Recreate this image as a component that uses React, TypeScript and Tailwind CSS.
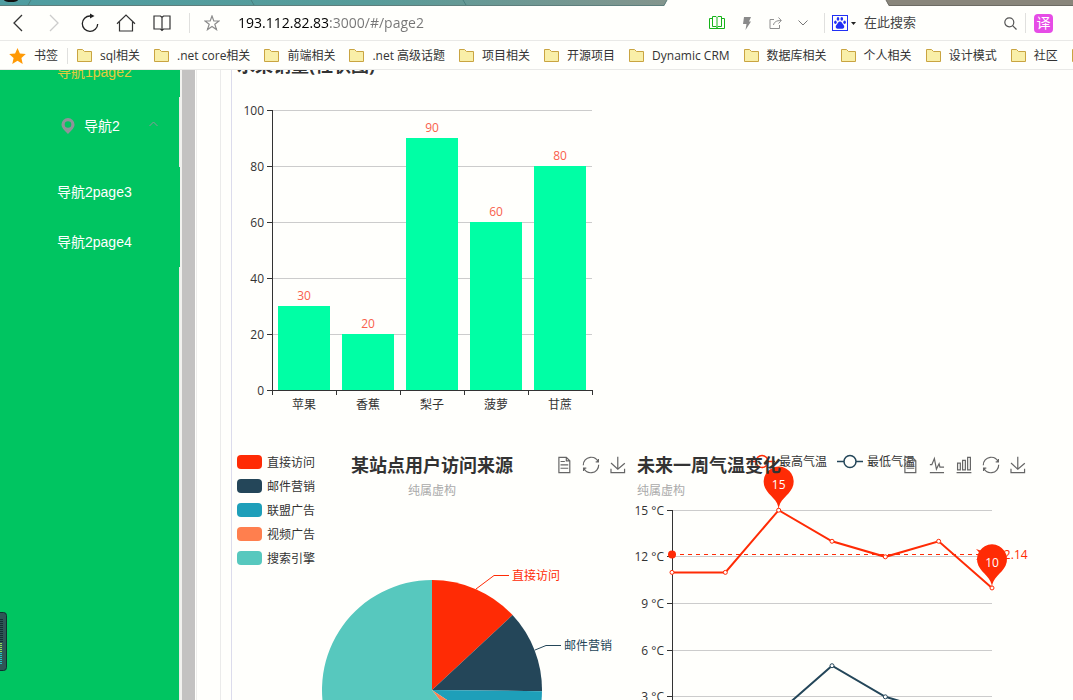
import { useState, type ReactNode } from "react";

const bookmarks = [
  "sql相关",
  ".net core相关",
  "前端相关",
  ".net 高级话题",
  "项目相关",
  "开源项目",
  "Dynamic CRM",
  "数据库相关",
  "个人相关",
  "设计模式",
  "社区",
];

const fruits = [
  { name: "苹果", value: 30 },
  { name: "香蕉", value: 20 },
  { name: "梨子", value: 90 },
  { name: "菠萝", value: 60 },
  { name: "甘蔗", value: 80 },
];

const sources = [
  { name: "直接访问", value: 335, color: "#ff2b05", swatch: "bg-[#ff2b05]" },
  { name: "邮件营销", value: 310, color: "#244659", swatch: "bg-[#244659]" },
  { name: "联盟广告", value: 234, color: "#1e9fb9", swatch: "bg-[#1e9fb9]" },
  { name: "视频广告", value: 135, color: "#ff7f4e", swatch: "bg-[#ff7f4e]" },
  { name: "搜索引擎", value: 1548, color: "#57c8be", swatch: "bg-[#57c8be]" },
];

const highs = [11, 11, 15, 13, 12, 13, 10];
const lows = [1, -2, 2, 5, 3, 2, 0];

const toolIcons = {
  数据视图: "M17.5,17.3H33M45.4,29.5h-28M11.5,2v56H51V14.8L38.4,2H11.5zM38.4,2.2v12.7H51M45.4,41.7h-28",
  切换为折线图: "M4.1,28.9h7.1l9.3-22l7.4,38l9.7-19.7l3,12.8h14.9M4.1,58h51.4",
  切换为柱状图: "M6.7,22.9h10V48h-10V22.9zM24.9,13h10v35h-10V13zM43.2,2h10v46h-10V2zM3.1,58h53.7",
  还原:
    "M47,18.9h9.8V8.7M56.3,20.1C52.1,9,40.5,0.6,26.8,2.1C12.6,3.7,1.6,16.2,2.1,30.6M13,41.1H3.1v10.2M3.7,39.9c4.2,11.1,15.8,19.5,29.5,18c14.2-1.6,25.2-14.1,24.7-28.5",
  保存为图片: "M4.7,22.9L29.3,45.5L54.7,23.4M4.6,43.6L4.6,58L53.8,58L53.8,43.6M29.2,45.1L29.2,0",
};

type Tool = keyof typeof toolIcons;

function IconButton({ label, className, children }: { label: string; className: string; children: ReactNode }) {
  return (
    <button type="button" aria-label={label} className={`flex h-8 shrink-0 items-center justify-center ${className}`}>
      {children}
    </button>
  );
}

function FolderIcon() {
  return (
    <svg className="shrink-0" width="15" height="13" viewBox="0 0 15 13" fill="#f9efa8" stroke="#c9a441">
      <path d="M0.5 0.5H5.5L7.5 2.5H14.5V12.5H0.5Z" />
    </svg>
  );
}

function TabStrip() {
  return (
    <svg className="block h-[6px] w-full shrink-0" viewBox="0 0 1073 6" preserveAspectRatio="none" aria-hidden="true">
      <defs>
        <linearGradient id="tabs" x1="0" x2="1">
          <stop offset="0" stopColor="#4f9da1" />
          <stop offset="0.55" stopColor="#579c9a" />
          <stop offset="1" stopColor="#84958d" />
        </linearGradient>
      </defs>
      <path d="M0 0H667L664 6H0Z" fill="url(#tabs)" />
      <path d="M0 5.5H664L667 0" fill="none" stroke="#5e7f7d" />
      <path d="M31 0L28 5M251 0L254 5M463 0L466 5" stroke="#49807f" fill="none" />
      <path d="M886 0H1073V6H889Z" fill="#89867b" />
      <path d="M886 0L889 5.5H1073" fill="none" stroke="#6d6b64" />
      <ellipse cx="11" cy="0" rx="7" ry="2" fill="#111" />
    </svg>
  );
}

function Toolbar() {
  const [address, setAddress] = useState("193.112.82.83:3000/#/page2");
  const [query, setQuery] = useState("");

  return (
    <header className="flex h-[35px] shrink-0 items-center border-b border-[#e9e9e7]">
      <IconButton label="后退" className="w-9">
        <svg width="12" height="18" viewBox="0 0 12 18" fill="none" stroke="#333" strokeWidth="1.3">
          <path d="M10 1L2 9L10 17" />
        </svg>
      </IconButton>
      <IconButton label="前进" className="w-9">
        <svg width="12" height="18" viewBox="0 0 12 18" fill="none" stroke="#ccc" strokeWidth="1.3">
          <path d="M2 1L10 9L2 17" />
        </svg>
      </IconButton>
      <IconButton label="刷新" className="w-9">
        <svg width="18" height="20" viewBox="0 0 18 20" fill="none" stroke="#222" strokeWidth="1.3">
          <path d="M9 3A7.7 7.7 0 1 0 16.7 11" />
          <path d="M9 0.5L13.5 3L9 5.5Z" fill="#222" stroke="none" />
        </svg>
      </IconButton>
      <IconButton label="主页" className="w-9">
        <svg width="20" height="18" viewBox="0 0 20 18" fill="none" stroke="#333" strokeWidth="1.2">
          <path d="M1 9.7L10 1L19 9.7M3.5 8V17H16.5V8" />
        </svg>
      </IconButton>
      <IconButton label="阅读" className="w-9">
        <svg width="18" height="18" viewBox="0 0 18 18" fill="none" stroke="#333" strokeWidth="1.2">
          <path d="M1 2H7.5L9 3.5L10.5 2H17V15H10.5L9 16.5L7.5 15H1ZM9 3.5V17" />
        </svg>
      </IconButton>
      <span className="ml-[9px] h-5 w-px bg-[#e0e0de]" />
      <form className="flex min-w-0 flex-1 items-center" onSubmit={(event) => event.preventDefault()}>
        <IconButton label="收藏" className="w-11">
          <svg width="16" height="16" viewBox="0 0 16 16" fill="none" stroke="#8c8c8c" strokeWidth="1.2">
            <path d="M8 1L9.8 6H15L10.8 9.2L12.5 14.6L8 11.4L3.5 14.6L5.2 9.2L1 6H6.2Z" />
          </svg>
        </IconButton>
        {/* host is drawn darker than the port and path */}
        <input
          aria-label="地址"
          className="ml-1 w-full min-w-0 bg-linear-to-r from-black from-[91px] to-[#757575] to-[91px] bg-clip-text text-sm text-transparent caret-black outline-none"
          value={address}
          onChange={(event) => setAddress(event.target.value)}
        />
      </form>
      <IconButton label="阅读模式" className="w-8">
        <svg width="16" height="14" viewBox="0 0 16 14" fill="none" stroke="#16b31a">
          <path d="M3.5 10.5V0.5H7L8 1.5L9 0.5H12.5V10.5H9L8 11.5L7 10.5ZM8 1.5V13M3.5 2.5H0.5V12.5H15.5V2.5H12.5" />
        </svg>
      </IconButton>
      <IconButton label="加速" className="w-7">
        <svg width="8" height="13" viewBox="0 0 8 13" fill="#8a8a8a">
          <path d="M1 0H8L6 4.5H8L2.5 13L3.5 7H0Z" />
        </svg>
      </IconButton>
      <IconButton label="分享" className="w-7">
        <svg width="13" height="13" viewBox="0 0 13 13" fill="none" stroke="#8f8f8f">
          <path d="M5 2.5H1V11.5H10.5V8M4.5 8C5 5 7.5 3.5 12 3.5M9.5 0.5L12.3 3.5L9.5 6.5" />
        </svg>
      </IconButton>
      <IconButton label="更多" className="w-7">
        <svg width="10" height="6" viewBox="0 0 10 6" fill="none" stroke="#777">
          <path d="M0.5 0.5L5 5L9.5 0.5" />
        </svg>
      </IconButton>
      <form
        className="ml-[7px] flex w-[249px] shrink-0 items-center"
        role="search"
        onSubmit={(event) => event.preventDefault()}
      >
        <span className="mr-[7px] h-5 w-px bg-[#e0e0de]" />
        <button type="button" aria-label="选择搜索引擎" className="flex items-center gap-[3px]">
          <svg width="16" height="16" viewBox="0 0 16 16" fill="#2130f5">
            <rect x="0.5" y="0.5" width="15" height="15" fill="none" stroke="#2130f5" />
            <ellipse cx="3.4" cy="7.2" rx="1.3" ry="1.8" />
            <ellipse cx="6" cy="3.9" rx="1.3" ry="1.8" />
            <ellipse cx="9.8" cy="3.9" rx="1.3" ry="1.8" />
            <ellipse cx="12.6" cy="7.2" rx="1.3" ry="1.8" />
            <path d="M8 6.6C9.8 6.6 10 8.4 11.2 9.6C13 11.3 12.4 14 10.2 13.8C8.8 13.6 7.2 13.6 5.8 13.8C3.6 14 3 11.3 4.8 9.6C6 8.4 6.2 6.6 8 6.6Z" />
          </svg>
          <svg width="5" height="3" viewBox="0 0 5 3" fill="#222">
            <path d="M0 0H5L2.5 3Z" />
          </svg>
        </button>
        <input
          aria-label="搜索"
          className="ml-2 w-32 text-[13px] text-[#444] outline-none placeholder:text-[#444]"
          placeholder="在此搜索"
          value={query}
          onChange={(event) => setQuery(event.target.value)}
        />
        <button type="submit" aria-label="搜索" className="ml-auto">
          <svg width="13" height="13" viewBox="0 0 13 13" fill="none" stroke="#555" strokeWidth="1.2">
            <circle cx="5.3" cy="5.3" r="4.5" />
            <path d="M8.6 8.6L12.5 12.5" />
          </svg>
        </button>
        <span className="mx-2 h-5 w-px bg-[#e0e0de]" />
        <button
          type="button"
          className="mr-5 flex size-[19px] items-center justify-center rounded-sm bg-[#e64ce6] text-sm leading-none text-white"
        >
          译
        </button>
      </form>
    </header>
  );
}

function BookmarkBar() {
  return (
    <nav className="flex h-[29px] shrink-0 items-center overflow-hidden border-b border-[#e9e9e7] pt-px text-xs whitespace-nowrap text-[#333]">
      <a href="#/bookmarks" className="ml-[9px] flex items-center gap-2">
        <svg width="17" height="16" viewBox="0 0 17 16" fill="#ff9a05">
          <path d="M8.5 0L10.9 5.4L16.8 6L12.4 10L13.7 16L8.5 12.8L3.3 16L4.6 10L0.2 6L6.1 5.4Z" />
        </svg>
        书签
      </a>
      <span className="mx-[9px] h-4 w-px shrink-0 bg-[#e0e0de]" />
      <div className="flex items-center gap-[14px]">
        {bookmarks.map((name) => (
          <a key={name} href="#/bookmarks" className="flex shrink-0 items-center gap-2">
            <FolderIcon />
            {name}
          </a>
        ))}
        <button type="button" aria-label="更多书签">
          <FolderIcon />
        </button>
      </div>
    </nav>
  );
}

function Sidebar() {
  return (
    <aside className="w-[180px] shrink-0 border-r border-[#e9ebe6] bg-[#00c561] font-['Liberation_Sans','Noto_Sans_CJK_SC',sans-serif] text-sm text-white">
      <nav className="-mt-[23px]">
        <a href="#/page2" className="-mr-px flex h-[50px] items-center bg-[#00c561] pl-[57px] text-[#e3cb3c]">
          导航1page2
        </a>
        <button type="button" aria-expanded="true" className="flex h-[58px] w-full items-center pl-[61px]">
          <svg width="14" height="16" viewBox="0 0 13 16" fill="#909399" fillRule="evenodd">
            <path d="M6.5 0A6.5 6.5 0 0 1 13 6.5C13 9.6 10.6 12 6.5 16C2.4 12 0 9.6 0 6.5A6.5 6.5 0 0 1 6.5 0ZM6.5 3.2A3.3 3.3 0 1 0 6.5 9.8A3.3 3.3 0 1 0 6.5 3.2Z" />
          </svg>
          <span className="ml-[9px]">导航2</span>
          <svg className="mr-[21px] mb-1 ml-auto" width="9" height="6" viewBox="0 0 9 6" fill="none" stroke="#909399">
            <path d="M0.5 5L4.5 1L8.5 5" />
          </svg>
        </button>
        <div className="mt-3">
          {["page3", "page4"].map((page) => (
            <a
              key={page}
              href={`#/${page}`}
              className="-mr-px flex h-[50px] items-center bg-[#00c561] pl-[57px]"
            >
              导航2{page}
            </a>
          ))}
        </div>
      </nav>
    </aside>
  );
}

function Toolbox({ tools }: { tools: Tool[] }) {
  return (
    <div className="absolute top-[7px] right-[6px] flex gap-[11px]">
      {tools.map((tool) => (
        <button key={tool} type="button" aria-label={tool} className="size-4">
          <svg
            className="block size-full overflow-visible"
            viewBox="1 1 58 58"
            fill="none"
            stroke="#666"
            strokeWidth="1.2"
          >
            <path d={toolIcons[tool]} vectorEffect="non-scaling-stroke" />
          </svg>
        </button>
      ))}
    </div>
  );
}

function ChartTitle({ title, subtitle, centered }: { title: string; subtitle?: string; centered?: boolean }) {
  return (
    <div className={`absolute inset-x-[5px] top-[5px] ${centered ? "text-center" : ""}`}>
      <h2 className="text-lg leading-5 font-bold text-[#333]">{title}</h2>
      {subtitle ? <p className="mt-[6px] text-xs leading-5 text-[#aaa]">{subtitle}</p> : null}
    </div>
  );
}

function FruitChart() {
  const y = (value: number) => 340 - value * 2.8;

  return (
    <section className="relative size-[400px]">
      <svg className="block size-full text-xs" viewBox="0 0 400 400">
        {[0, 20, 40, 60, 80, 100].map((tick) => (
          <g key={tick}>
            {tick > 0 ? <path d={`M40 ${y(tick) + 0.5}H360`} stroke="#ccc" /> : null}
            <path d={`M35 ${y(tick) + 0.5}H40`} stroke="#333" />
            <text x="32" y={y(tick) + 5} textAnchor="end" fill="#333">
              {tick}
            </text>
          </g>
        ))}
        {fruits.map((fruit, index) => (
          <g key={fruit.name}>
            <rect x={46 + index * 64} y={y(fruit.value)} width="52" height={340 - y(fruit.value)} fill="#00ffa5" />
            <text x={72 + index * 64} y={y(fruit.value) - 6} textAnchor="middle" fill="#f9604c">
              {fruit.value}
            </text>
            <path d={`M${104.5 + index * 64} 340V345`} stroke="#333" />
            <text x={72 + index * 64} y="359" textAnchor="middle" fill="#333">
              {fruit.name}
            </text>
          </g>
        ))}
        <path d="M40.5 60V345M40 340.5H361" stroke="#333" />
      </svg>
      <ChartTitle title="水果销量(柱状图)" />
    </section>
  );
}

function slicePath(start: number, end: number) {
  const point = (turn: number) => {
    const angle = turn * Math.PI * 2;
    return `${200 + 110 * Math.sin(angle)} ${240 - 110 * Math.cos(angle)}`;
  };
  return `M200 240L${point(start)}A110 110 0 ${end - start > 0.5 ? 1 : 0} 1 ${point(end)}Z`;
}

function SourceChart() {
  const total = sources.reduce((sum, source) => sum + source.value, 0);
  let offset = 0;

  return (
    <section className="relative size-[400px]">
      <svg className="block size-full text-xs" viewBox="0 0 400 400">
        {sources.map((source) => {
          const start = offset / total;
          offset += source.value;
          return <path key={source.name} d={slicePath(start, offset / total)} fill={source.color} />;
        })}
        <path d="M244 139L262 125.5H277" fill="none" stroke="#ff2b05" />
        <text x="280" y="130" fill="#ff2b05">
          直接访问
        </text>
        <path d="M303 200L314 195.5H329" fill="none" stroke="#244659" />
        <text x="332" y="200" fill="#244659">
          邮件营销
        </text>
      </svg>
      <ChartTitle title="某站点用户访问来源" subtitle="纯属虚构" centered />
      <ul className="absolute top-[5px] left-[5px] flex flex-col gap-2 text-xs leading-4 text-[#333]">
        {sources.map((source) => (
          <li key={source.name} className="flex items-start gap-[5px]">
            <span className={`h-[14px] w-[25px] rounded ${source.swatch}`} />
            {source.name}
          </li>
        ))}
      </ul>
      <Toolbox tools={["数据视图", "还原", "保存为图片"]} />
    </section>
  );
}

function Pin({ x, y, label }: { x: number; y: number; label: number }) {
  return (
    <g transform={`translate(${x} ${y})`}>
      <path
        d="M-13.55-22.14A15 15 0 1 1 13.55-22.14C9.7-14 0-10.5 0 0C0-10.5-9.7-14-13.55-22.14Z"
        fill="#ff2b05"
      />
      <text y="-21" textAnchor="middle" fill="#fff" className="font-medium">
        {label}
      </text>
    </g>
  );
}

function TemperatureChart() {
  const x = (index: number) => 40 + (index * 320) / 6;
  const y = (value: number) => 293.5 - (value * 140) / 9;
  const series = [
    { name: "最低气温", values: lows, color: "#244659", legendX: 205 },
    { name: "最高气温", values: highs, color: "#ff2b05", legendX: 117 },
  ];

  return (
    <section className="relative size-[400px]">
      <svg className="block size-full overflow-visible text-xs" viewBox="0 0 400 400">
        {[15, 12, 9, 6, 3, 0].map((tick) => (
          <g key={tick}>
            <path d={`M40 ${Math.floor(y(tick)) + 0.5}H360`} stroke="#ccc" />
            <path d={`M35 ${Math.floor(y(tick)) + 0.5}H40`} stroke="#333" />
            <text x="32" y={Math.floor(y(tick)) + 5} textAnchor="end" fill="#333">
              {tick} °C
            </text>
          </g>
        ))}
        <path d="M40.5 60V340" stroke="#333" />
        {series.map((item) => (
          <g key={item.name} stroke={item.color} fill="none">
            <path d={`M${item.legendX} 11.5h7m12 0h7`} strokeWidth="1.5" />
            <circle cx={item.legendX + 13} cy="11.5" r="6" strokeWidth="1.5" />
            <text x={item.legendX + 30} y="16" fill="#333" stroke="none">
              {item.name}
            </text>
            <polyline points={item.values.map((value, i) => `${x(i)},${y(value)}`).join(" ")} strokeWidth="2" />
            {item.values.map((value, i) => (
              <circle key={i} cx={x(i)} cy={y(value)} r="2" fill="#fff" />
            ))}
          </g>
        ))}
        <path d="M40 104.5H350" stroke="#ff2b05" strokeDasharray="4 4" />
        <circle cx="40" cy="104.5" r="4" fill="#ff2b05" />
        <path d="M360 104.5L344 99L349 104.5L344 110Z" fill="#ff2b05" />
        <text x="365" y="109" fill="#ff2b05">
          12.14
        </text>
        <Pin x={x(2)} y={y(15)} label={15} />
        <Pin x={x(6)} y={y(10)} label={10} />
      </svg>
      <ChartTitle title="未来一周气温变化" subtitle="纯属虚构" />
      <Toolbox tools={["数据视图", "切换为折线图", "切换为柱状图", "还原", "保存为图片"]} />
    </section>
  );
}

function SpeedWidget() {
  return (
    <svg className="absolute top-[612px] left-0" width="7" height="59" viewBox="0 0 7 59" aria-hidden="true">
      <rect x="-5" y="0.5" width="11.5" height="58" rx="3" fill="#2f5556" stroke="#112f30" />
      <path d="M1.5 7V30" stroke="#142f33" strokeWidth="3" strokeDasharray="1 1" />
      <path d="M1 31V40" stroke="#8edb5b" strokeWidth="2" strokeDasharray="1 1" />
      <path d="M1 41V53" stroke="#25c3c4" strokeWidth="2" strokeDasharray="1 1" />
    </svg>
  );
}

export default function App() {
  return (
    <div className="relative flex h-screen flex-col overflow-hidden bg-[#fffffc] font-['Open_Sans','Noto_Sans_CJK_SC',sans-serif]">
      <TabStrip />
      <Toolbar />
      <BookmarkBar />
      <div className="flex min-h-0 flex-1 overflow-hidden">
        <Sidebar />
        <div className="w-[15px] shrink-0 border-l-2 border-[#f1f1ee] bg-[#c3c2c1]" />
        <main className="ml-px min-w-0 flex-1 overflow-hidden border-l border-[#eeeeec] pl-[23px]">
          <div className="border-l border-[#ebebea] pl-[10px]">
            <div className="-mt-5 border-l border-[#dcdcec]">
              <FruitChart />
              <div className="flex">
                <SourceChart />
                <TemperatureChart />
              </div>
            </div>
          </div>
        </main>
      </div>
      <SpeedWidget />
    </div>
  );
}
